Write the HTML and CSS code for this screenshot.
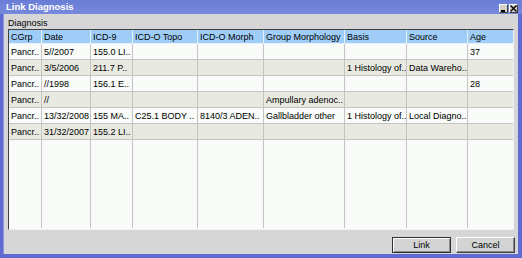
FILE: index.html
```html
<!DOCTYPE html>
<html>
<head>
<meta charset="utf-8">
<link rel="stylesheet" href="styles.css">
</head>
<body>
<div class="window">
  <div class="titlebar">
    <span class="title">Link Diagnosis</span>
    <div class="tbtns">
      <span class="tbtn"><svg width="7" height="7" viewBox="0 0 7 7"><rect x="1" y="5" width="4" height="2" fill="#000"/></svg></span>
      <span class="tbtn"><svg width="7" height="7" viewBox="0 0 7 7"><path d="M0.5 0.5 L6.5 6.5 M6.5 0.5 L0.5 6.5" stroke="#000" stroke-width="1.4"/></svg></span>
    </div>
  </div>
  <div class="content">
    <div class="label">Diagnosis</div>
    <div class="grid">
      <table>
        <colgroup>
          <col class="c1"><col class="c2"><col class="c3"><col class="c4"><col class="c5"><col class="c6"><col class="c7"><col class="c8"><col class="c9">
        </colgroup>
        <thead>
          <tr><th>CGrp</th><th>Date</th><th>ICD-9</th><th>ICD-O Topo</th><th>ICD-O Morph</th><th>Group Morphology</th><th>Basis</th><th>Source</th><th>Age</th></tr>
        </thead>
        <tbody>
          <tr class="odd"><td>Pancr..</td><td>5//2007</td><td>155.0 LI..</td><td></td><td></td><td></td><td></td><td></td><td>37</td></tr>
          <tr class="even"><td>Pancr..</td><td>3/5/2006</td><td>211.7 P..</td><td></td><td></td><td></td><td>1 Histology of..</td><td>Data Wareho..</td><td></td></tr>
          <tr class="odd"><td>Pancr..</td><td>//1998</td><td>156.1 E..</td><td></td><td></td><td></td><td></td><td></td><td>28</td></tr>
          <tr class="even"><td>Pancr..</td><td>//</td><td></td><td></td><td></td><td>Ampullary adenoc..</td><td></td><td></td><td></td></tr>
          <tr class="odd"><td>Pancr..</td><td>13/32/2008</td><td>155 MA..</td><td>C25.1 BODY ..</td><td>8140/3 ADEN..</td><td>Gallbladder other</td><td>1 Histology of..</td><td>Local Diagno..</td><td></td></tr>
          <tr class="even"><td>Pancr..</td><td>31/32/2007</td><td>155.2 LI..</td><td></td><td></td><td></td><td></td><td></td><td></td></tr>
          <tr class="filler"><td></td><td></td><td></td><td></td><td></td><td></td><td></td><td></td><td></td></tr>
        </tbody>
      </table>
    </div>
    <div class="actions">
      <button class="btn focus">Link</button>
      <button class="btn">Cancel</button>
    </div>
  </div>
</div>
</body>
</html>
```
FILE: styles.css
```css
* { box-sizing: border-box; }
html, body { margin: 0; padding: 0; }
body {
  width: 522px;
  height: 258px;
  font-family: "Liberation Sans", Arial, sans-serif;
  font-size: 9px;
  color: #000;
  background: #d4d4d4;
}
.window {
  width: 522px;
  height: 258px;
  display: flex;
  flex-direction: column;
  background: #5f6bd2;
}
.titlebar {
  height: 14px;
  flex: none;
  display: flex;
  align-items: flex-start;
  justify-content: space-between;
  background: linear-gradient(#6a7dd6, #7689dc);
  padding: 0 4px 0 6px;
}
.title {
  color: #fff;
  font-weight: bold;
  font-size: 9.5px;
  line-height: 13px;
}
.tbtns {
  display: flex;
  gap: 1px;
  padding-top: 4px;
}
.tbtn {
  width: 9px;
  height: 9px;
  background: #d4d0c8;
  border: 1px solid;
  border-color: #fff #404040 #404040 #fff;
  display: flex;
  align-items: center;
  justify-content: center;
}
.tbtn svg { display: block; }
.content {
  flex: 1;
  margin: 0 4px 4px 3px;
  background: #d6d6d6;
  border-left: 1px solid #8a94e0;
  display: flex;
  flex-direction: column;
  padding: 0 4px 0 4px;
}
.label {
  height: 15px;
  line-height: 15px;
  padding: 2px 0 0 0;
  margin-left: 0;
}
.grid {
  width: 506px;
  height: 201px;
  border: 1px solid;
  border-color: #404040 #f2f2f2 #f2f2f2 #404040;
  background: #f8fbf7;
  overflow: hidden;
}
table {
  border-collapse: separate;
  border-spacing: 0;
  table-layout: fixed;
  width: 504px;
}
col.c1 { width: 33px; }
col.c2 { width: 49px; }
col.c3 { width: 42px; }
col.c4 { width: 65px; }
col.c5 { width: 66px; }
col.c6 { width: 81px; }
col.c7 { width: 62px; }
col.c8 { width: 61px; }
col.c9 { width: 45px; }
th, td {
  padding: 0 0 0 2px;
  text-align: left;
  font-weight: normal;
  white-space: nowrap;
  overflow: hidden;
  border-right: 1px solid #c4c4c4;
  border-bottom: 1px solid #c4c4c4;
}
th {
  height: 14px;
  background: #9fcdf7;
  border-right-color: #e6f1fb;
  border-bottom-color: #e6f1fb;
  line-height: 12px;
}
td { height: 16px; line-height: 14px; }
tr.odd td { background: #f8fbf7; }
tr.even td { background: #e8e9e1; }
tr.filler td {
  height: 88px;
  background: #f8fbf7;
  border-bottom: none;
}
th:last-child, td:last-child { border-right: none; }
.actions {
  display: flex;
  justify-content: flex-end;
  gap: 5px;
  padding: 7px 0 0 0;
  margin-right: -1px;
}
.btn {
  width: 59px;
  height: 16px;
  padding: 0;
  font-family: "Liberation Sans", Arial, sans-serif;
  font-size: 9px;
  color: #000;
  background: #d4d4d4;
  border: 1px solid;
  border-color: #ffffff #404040 #404040 #ffffff;
  box-shadow: inset -1px -1px 0 #8a8a8a;
}
.btn.focus {
  border: 1px solid #303030;
  box-shadow: inset 1px 1px 0 #fff, inset -1px -1px 0 #8a8a8a;
}
```
